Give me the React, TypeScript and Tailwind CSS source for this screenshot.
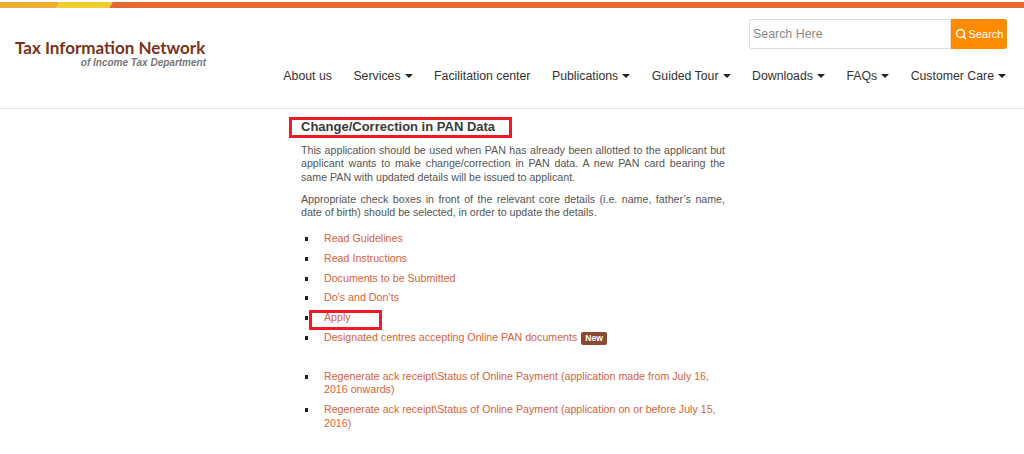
import React from 'react';
import { Search } from 'lucide-react';

const navItems = [
  { label: 'About us', caret: false },
  { label: 'Services', caret: true },
  { label: 'Facilitation center', caret: false },
  { label: 'Publications', caret: true },
  { label: 'Guided Tour', caret: true },
  { label: 'Downloads', caret: true },
  { label: 'FAQs', caret: true },
  { label: 'Customer Care', caret: true },
];

const firstLinks = [
  'Read Guidelines',
  'Read Instructions',
  'Documents to be Submitted',
  'Do’s and Don’ts',
  'Apply',
];

function Bullet() {
  return <span className="mt-[5px] mr-[16px] h-[4px] w-[3px] shrink-0 bg-[#222]" />;
}

function LinkRow({ children, className = '' }: { children: React.ReactNode; className?: string }) {
  return (
    <li className={`flex text-[#d9623a] ${className}`}>
      <Bullet />
      <div>{children}</div>
    </li>
  );
}

export default function App() {
  return (
    <div className="h-[454px] w-[1024px] overflow-hidden bg-white text-[12.3px] font-['Liberation_Sans',Arial,sans-serif]">
      {/* top stripe */}
      <div className="pt-[2px]">
        <div className="flex h-[6px] w-full overflow-hidden">
          <div className="ml-[-10px] w-[68px] skew-x-[-30deg] bg-[#efb02f]" />
          <div className="w-[53px] skew-x-[-30deg] bg-[#f0cc2e]" />
          <div className="mr-[-10px] flex-1 skew-x-[-30deg] bg-[#e4682f]" />
        </div>
      </div>

      {/* header */}
      <header className="flex h-[101px] justify-between border-b border-[#e5e5e5]">
        <div className="ml-[15px] mt-[31px] w-[191px]">
          <div className="whitespace-nowrap font-['Lato',sans-serif] text-[17px] font-bold leading-[18px] text-[#7a3419]">Tax Information Network</div>
          <div className="text-right text-[10px] font-bold italic leading-[12px] text-[#777]">of Income Tax Department</div>
        </div>
        <div className="mr-[18px] flex flex-col items-end">
          <div className="mr-[-1px] mt-[11px] flex h-[30px] w-[258px]">
            <div className="flex flex-1 items-center rounded-l-[2px] border border-[#ddd] pl-[3px] text-[12.4px] text-[#8a8a8a]">Search Here</div>
            <div className="flex w-[56px] items-center justify-center gap-[2px] rounded-r-[3px] bg-[#ff8c00] text-[11px] text-white">
              <Search size={12} strokeWidth={3} />
              Search
            </div>
          </div>
          <nav className="mt-[20px] flex gap-[21.5px] text-[#333]">
            {navItems.map((item) => (
              <span key={item.label} className="flex items-center whitespace-nowrap leading-[14px]">
                {item.label}
                {item.caret && <span className="ml-[4px] h-0 w-0 border-x-[4px] border-t-[4px] border-x-transparent border-t-[#222]" />}
              </span>
            ))}
          </nav>
        </div>
      </header>

      {/* content */}
      <main className="relative ml-[301px] w-[424px] pt-[9px] text-[10.67px] leading-[13.5px] text-[#555]">
        <h1 className="text-[13px] font-bold leading-[17px] text-[#3a3a3a]">Change/Correction in PAN Data</h1>
        <p className="mt-[8.7px] text-justify">
          This application should be used when PAN has already been allotted to the applicant but applicant wants to make change/correction in PAN data. A new PAN card bearing the same PAN with updated details will be issued to applicant.
        </p>
        <p className="mt-[8.8px] text-justify">
          Appropriate check boxes in front of the relevant core details (i.e. name, father’s name, date of birth) should be selected, in order to update the details.
        </p>
        <ul className="mt-[12px] flex flex-col gap-[6.3px] pl-[4px]">
          {firstLinks.map((l) => (
            <LinkRow key={l}>{l}</LinkRow>
          ))}
          <LinkRow>
            Designated centres accepting Online PAN documents
            <span className="ml-[4px] inline-block h-[13px] rounded-[2px] bg-[#8a4a32] px-[4px] align-middle text-[8.5px] font-bold leading-[13px] text-white">New</span>
          </LinkRow>
          <LinkRow className="mt-[19px]">Regenerate ack receipt\Status of Online Payment (application made from July 16, 2016 onwards)</LinkRow>
          <LinkRow>Regenerate ack receipt\Status of Online Payment (application on or before July 15, 2016)</LinkRow>
        </ul>
        {/* red annotation boxes */}
        <div className="absolute left-[-12px] top-[8px] h-[21px] w-[223px] border-[3px] border-[#ed1c24]" />
        <div className="absolute left-[8px] top-[201px] h-[20px] w-[73px] border-[3px] border-[#ed1c24]" />
      </main>
    </div>
  );
}
